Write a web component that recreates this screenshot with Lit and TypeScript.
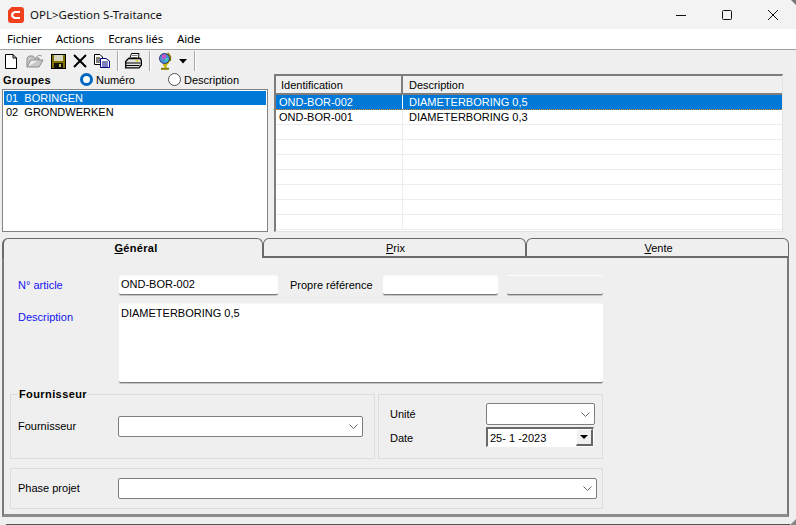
import { LitElement, html, css, svg } from 'lit';
import { customElement } from 'lit/decorators.js';

const chevron = svg`<svg class="chev" width="9" height="5" viewBox="0 0 9 5"><path d="M0.500 0.500 L4.500 4.500 L8.500 0.500" fill="none" stroke="#666" stroke-width="1"/></svg>`;

const icons = {
  newDoc: html`<svg width="12" height="15" viewBox="0 0 12 15"><path d="M0.5 0.5H8L11.5 4V14.5H0.5Z M8 0.5V4H11.5" fill="#fff" stroke="#000"/></svg>`,
  open: html`<svg width="18" height="14" viewBox="0 0 18 14"><path d="M1 13V4L3 2H7L8 4H13V6H5L1 13H13L17 6H13" fill="#c8c8c8" stroke="#8c8c8c"/><path d="M10 3 Q13 0 16 2" fill="none" stroke="#a0a0a0"/></svg>`,
  save: html`<svg width="15" height="15" viewBox="0 0 15 15"><rect x="0.5" y="0.5" width="14" height="14" fill="#807000" stroke="#000"/><rect x="3" y="1" width="9" height="6" fill="#d8d8c0"/><rect x="3" y="9" width="9" height="5" fill="#111"/><rect x="8" y="10" width="2" height="3" fill="#c8c060"/></svg>`,
  del: html`<svg width="14" height="14" viewBox="0 0 14 14"><path d="M1 1L13 13M13 1L1 13" stroke="#000" stroke-width="2"/></svg>`,
  copy: html`<svg width="16" height="14" viewBox="0 0 16 14"><path d="M0.5 0.5H6L8.5 3V10.5H0.5Z" fill="#fff" stroke="#000"/><path d="M6.5 4.5H12L15.5 7V13.5H6.5Z" fill="#fff" stroke="#000080"/><path d="M2 4H6M2 6H6M2 8H6" stroke="#000"/><path d="M8 8H14M8 10H14M8 12H14" stroke="#000080"/></svg>`,
  print: html`<svg width="17" height="16" viewBox="0 0 17 16"><path d="M4.500 6L6.500 0.500H14L13.500 6" fill="#fff" stroke="#000"/><path d="M7 2.500H12.500M6.500 4.500H12" stroke="#777"/><path d="M0.700 8.500L3.500 5.500H15.500L16.400 8V12L14 14.800H0.700Z" fill="#e4e4e4" stroke="#000" stroke-width="1.300"/><path d="M1 10H15.500M1 12.500H14.500" stroke="#000"/><rect x="10.500" y="7" width="3" height="1.500" fill="#e8d020"/></svg>`,
  globe: html`<svg width="13" height="18" viewBox="0 0 13 18"><path d="M2 16.800H10" stroke="#8a7c00" stroke-width="2"/><path d="M6.500 12V16" stroke="#c0b000" stroke-width="2.400"/><path d="M8.500 0.800 A7 7 0 0 1 4 13" fill="none" stroke="#c8b800" stroke-width="1.800"/><path d="M9 1 A7 7 0 0 1 11.500 9" fill="none" stroke="#5a5000" stroke-width="0.800"/><circle cx="5.500" cy="6.500" r="5" fill="#5090d8" stroke="#101060" stroke-width="0.800"/><path d="M3 3 L7 2.500 L7 6 L3 7Z" fill="#d050c0"/><path d="M6 7 L9.500 5 L9 9 L6.500 10.500Z" fill="#40c8c0"/></svg>`,
  logo: html`<svg width="16" height="16" viewBox="0 0 16 16"><path d="M3.500 0H13A3 3 0 0 1 16 3V13A3 3 0 0 1 13 16H3A3 3 0 0 1 0 13V3.500Z" fill="#f0401e"/><path d="M12 5H6.500L4.300 6.800V9.200L6.500 11H12" fill="none" stroke="#fff" stroke-width="2.200"/></svg>`,
};

@customElement('app-root')
export class AppRoot extends LitElement {
  static styles = css`
    :host {
      display: block;
      position: relative;
      width: 796px;
      height: 525px;
      overflow: hidden;
      background: #efefef;
      font-family: 'Liberation Sans', Arial, sans-serif;
      font-size: 11px;
      color: #000;
    }
    * { box-sizing: border-box; }

    /* window chrome */
    .title {
      height: 29px;
      background: #f3f3f3;
      display: flex;
      align-items: center;
      padding-left: 8px;
      font-family: 'Noto Sans', sans-serif;
      font-size: 11.5px;
      color: #111;
    }
    .title .text { margin-left: 6px; flex: 1; }
    .winbtns { display: flex; }
    .winbtns button {
      all: unset;
      width: 46px;
      height: 29px;
      display: flex;
      align-items: center;
      justify-content: center;
    }
    .menu {
      height: 21px;
      background: #fff;
      border-bottom: 1px solid #a0a0a0;
      display: flex;
      align-items: center;
      padding: 0 0 1px 7px;
      gap: 14px;
      font-family: 'Noto Sans', sans-serif;
      font-size: 11.5px;
      letter-spacing: -0.15px;
    }
    .tools {
      height: 22px;
      display: flex;
      align-items: center;
      padding-left: 5px;
      background: #f0f0f0;
    }
    .tools svg { display: block; flex: none; }
    .sep { width: 1px; height: 20px; background: #a8a8a8; box-shadow: 1px 0 0 #fff; }
    .gap7 { width: 7px; }
    .gap9 { width: 9px; }

    /* top section */
    .top { display: flex; height: 166px; padding-left: 2px; }
    .left { width: 266px; }
    .groups { height: 17px; display: flex; align-items: center; padding: 0 0 2px 1px; }
    .groups b { width: 77px; letter-spacing: 0.4px; }
    .radio { display: flex; align-items: center; gap: 3px; }
    .radio.first { width: 88px; letter-spacing: -0.05px; }
    .dot { width: 13px; height: 13px; border-radius: 50%; border: 1px solid #555; background: #fff; }
    .dot.on { border: 3.500px solid #0067c0; background: #fff; }
    .list {
      height: 143px;
      background: #fff;
      border: 1px solid #828282;
      padding: 1px;
    }
    .list div { height: 14px; line-height: 14px; padding-left: 2px; white-space: pre; }
    .list .sel { background: #0078d7; color: #fff; }

    .grid {
      width: 509px;
      height: 158px;
      margin: 2px 0 0 6px;
      border: 2px solid #7d7d7d;
      border-right: 1px solid #e4e4e4;
      border-bottom: 1px solid #e4e4e4;
      background: #fff;
      overflow: hidden;
    }
    .head {
      display: flex;
      height: 19px;
      background: #f0f0f0;
      border-bottom: 2px solid #7d7d7d;
      line-height: 18px;
    }
    .head span { padding-left: 6px; }
    .head span:first-child { width: 127px; padding-left: 5px; border-right: 2px solid #7d7d7d; }
    .row { display: flex; height: 15px; line-height: 14px; border-bottom: 1px solid #ececec; }
    .row span:first-child { width: 127px; padding-left: 3px; border-right: 1px solid #ececec; }
    .row span:last-child { padding-left: 6px; }
    .row.sel { background: #0078d7; color: #fff; border-bottom: 1px dotted #e08a20; }
    .row.sel span:first-child { border-right-color: #fff; }

    /* tabs */
    .tabs { display: flex; height: 20px; margin-left: 2px; width: 787px; }
    .tab {
      width: 263px;
      padding-left: 2px;
      text-align: center;
      line-height: 19px;
      border: 1px solid #6a6a6a;
      border-width: 1.500px 1px 2px 1px;
      border-radius: 6px 6px 0 0;
    }
    .tab.active {
      width: 261px;
      padding-left: 6px;
      border-bottom: none;
      border-left-width: 2px;
      font-weight: bold;
      letter-spacing: 0.3px;
    }
    .panel {
      margin-left: 2px;
      width: 787px;
      height: 259px;
      border: 1px solid #7a7a7a;
      border-width: 0 2px 3px 2px;
      border-bottom-color: #8c8c8c;
      padding: 17px 0 0 6px;
    }

    /* form */
    .form { width: 593px; display: flex; flex-direction: column; }
    .r1 { display: flex; align-items: center; height: 20px; padding-left: 8px; }
    .lab { width: 101px; flex: none; }
    .blue { color: #1414f0; }
    .inp {
      height: 20px;
      background: #fff;
      border-bottom: 1px solid #7a7a7a;
      box-shadow: 0 1px 0 #c4c4c4;
      border-top: 1px solid #f8f8f8;
      border-radius: 2px;
      padding: 0 2px;
      line-height: 16px;
    }
    .off { background: #efefef; border-top-color: #fff; margin-left: 9px; }
    .propre { width: 105px; padding-left: 12px; flex: none; }
    .r2 { display: flex; padding-left: 8px; margin-top: 8px; height: 80px; }
    .r2 .lab { padding-top: 8px; }
    .area { flex: 1; height: 80px; padding-top: 2px; line-height: 14px; }
    .boxes { display: flex; gap: 3px; margin-top: 11px; height: 65px; }
    .box { border: 1px solid #dcdcdc; position: relative; }
    .legend {
      position: absolute;
      top: -7px;
      left: 7px;
      padding: 0 1px;
      background: #efefef;
      font-weight: bold;
      letter-spacing: 0.4px;
    }
    .sup { width: 365px; padding: 21px 11px 0 7px; display: flex; align-items: flex-start; }
    .sup .lab { width: 100px; line-height: 20px; }
    .combo {
      height: 21px;
      flex: 1;
      background: #fff;
      border: 1px solid #7e7e7e;
      border-radius: 2px;
      display: flex;
      align-items: center;
      justify-content: flex-end;
      padding-right: 4px;
    }
    .unit { width: 225px; padding: 8px 7px 0 11px; display: flex; flex-direction: column; gap: 2px; }
    .unit .line { display: flex; align-items: center; height: 22px; }
    .unit .lab { width: 96px; }
    .unit .combo { height: 22px; }
    .date {
      width: 108px;
      height: 20px;
      margin-top: -2px;
      background: #fff;
      border: 1px solid;
      border-width: 2px 1px 1px 2px;
      border-color: #6a6a6a #fff #fff #6a6a6a;
      display: flex;
      align-items: center;
      justify-content: space-between;
      padding-left: 2px;
    }
    .spin {
      width: 17px;
      height: 17px;
      background: #f0f0f0;
      border: 1px solid;
      border-width: 1px 2px 2px 1px;
      border-color: #fff #666 #666 #fff;
      display: flex;
      align-items: center;
      justify-content: center;
    }
    .phase { width: 593px; height: 41px; margin-top: 9px; padding: 9px 5px 0 7px; display: flex; }
    .phase .lab { width: 100px; line-height: 20px; }
    .foot { height: 1px; margin: 7px 0 0 6px; width: 784px; background: #555; }
    .corner { position: absolute; display: block; }
    .corner.tr { top: 0; right: 0; }
    .corner.br { bottom: 0; right: 0; }
  `;

  render() {
    return html`
      <div class="title">
        ${icons.logo}
        <span class="text">OPL&gt;Gestion S-Traitance</span>
        <div class="winbtns">
          <button><svg width="10" height="10" viewBox="0 0 10 10"><path d="M0 5.500H10" stroke="#111"/></svg></button>
          <button><svg width="10" height="10" viewBox="0 0 10 10"><rect x="0.500" y="0.500" width="9" height="9" rx="1" fill="none" stroke="#111"/></svg></button>
          <button><svg width="10" height="10" viewBox="0 0 10 10"><path d="M0 0L10 10M10 0L0 10" stroke="#111"/></svg></button>
        </div>
      </div>
      <div class="menu">
        <span>Fichier</span><span>Actions</span><span>Ecrans liés</span><span>Aide</span>
      </div>
      <div class="tools">
        ${icons.newDoc}
        <span class="gap9"></span>${icons.open}
        <span class="gap7"></span>${icons.save}
        <span class="gap7"></span>${icons.del}
        <span class="gap7"></span>${icons.copy}
        <span class="gap7"></span><i class="sep"></i>
        <span class="gap7"></span>${icons.print}
        <span class="gap7"></span><i class="sep"></i>
        <span class="gap9"></span>${icons.globe}
        <span class="gap7"></span>
        <svg width="8" height="5" viewBox="0 0 8 5"><path d="M0 0H8L4 4.500Z" fill="#000"/></svg>
        <span class="gap7"></span><i class="sep"></i>
      </div>
      <div class="top">
        <div class="left">
          <div class="groups">
            <b>Groupes</b>
            <span class="radio first"><i class="dot on"></i>Numéro</span>
            <span class="radio"><i class="dot"></i>Description</span>
          </div>
          <div class="list">
            <div class="sel">01  BORINGEN</div>
            <div>02  GRONDWERKEN</div>
          </div>
        </div>
        <div class="grid">
          <div class="head"><span>Identification</span><span>Description</span></div>
          <div class="row sel"><span>OND-BOR-002</span><span>DIAMETERBORING 0,5</span></div>
          <div class="row"><span>OND-BOR-001</span><span>DIAMETERBORING 0,3</span></div>
          ${[0, 1, 2, 3, 4, 5, 6].map(() => html`<div class="row"><span></span><span></span></div>`)}
        </div>
      </div>
      <div class="tabs">
        <div class="tab active"><u>G</u>énéral</div>
        <div class="tab"><u>P</u>rix</div>
        <div class="tab"><u>V</u>ente</div>
      </div>
      <div class="panel">
        <div class="form">
          <div class="r1">
            <span class="lab blue">N° article</span>
            <div class="inp" style="width:159px">OND-BOR-002</div>
            <span class="propre">Propre référence</span>
            <div class="inp" style="width:115px"></div>
            <div class="inp off" style="width:96px"></div>
          </div>
          <div class="r2">
            <span class="lab blue">Description</span>
            <div class="inp area">DIAMETERBORING 0,5</div>
          </div>
          <div class="boxes">
            <div class="box sup">
              <span class="legend">Fournisseur</span>
              <span class="lab">Fournisseur</span>
              <div class="combo">${chevron}</div>
            </div>
            <div class="box unit">
              <div class="line"><span class="lab">Unité</span><div class="combo">${chevron}</div></div>
              <div class="line"><span class="lab">Date</span>
                <div class="date">25- 1 -2023
                  <span class="spin"><svg width="8" height="4" viewBox="0 0 8 4"><path d="M0 0H8L4 4Z"/></svg></span>
                </div>
              </div>
            </div>
          </div>
          <div class="box phase">
            <span class="lab">Phase projet</span>
            <div class="combo">${chevron}</div>
          </div>
        </div>
      </div>
      <div class="foot"></div>
      <svg class="corner tr" width="5" height="5" viewBox="0 0 5 5"><path d="M0 0H5V5Z" fill="#777"/></svg>
      <svg class="corner br" width="6" height="6" viewBox="0 0 6 6"><path d="M6 0V6H0Z" fill="#888"/></svg>
    `;
  }
}
